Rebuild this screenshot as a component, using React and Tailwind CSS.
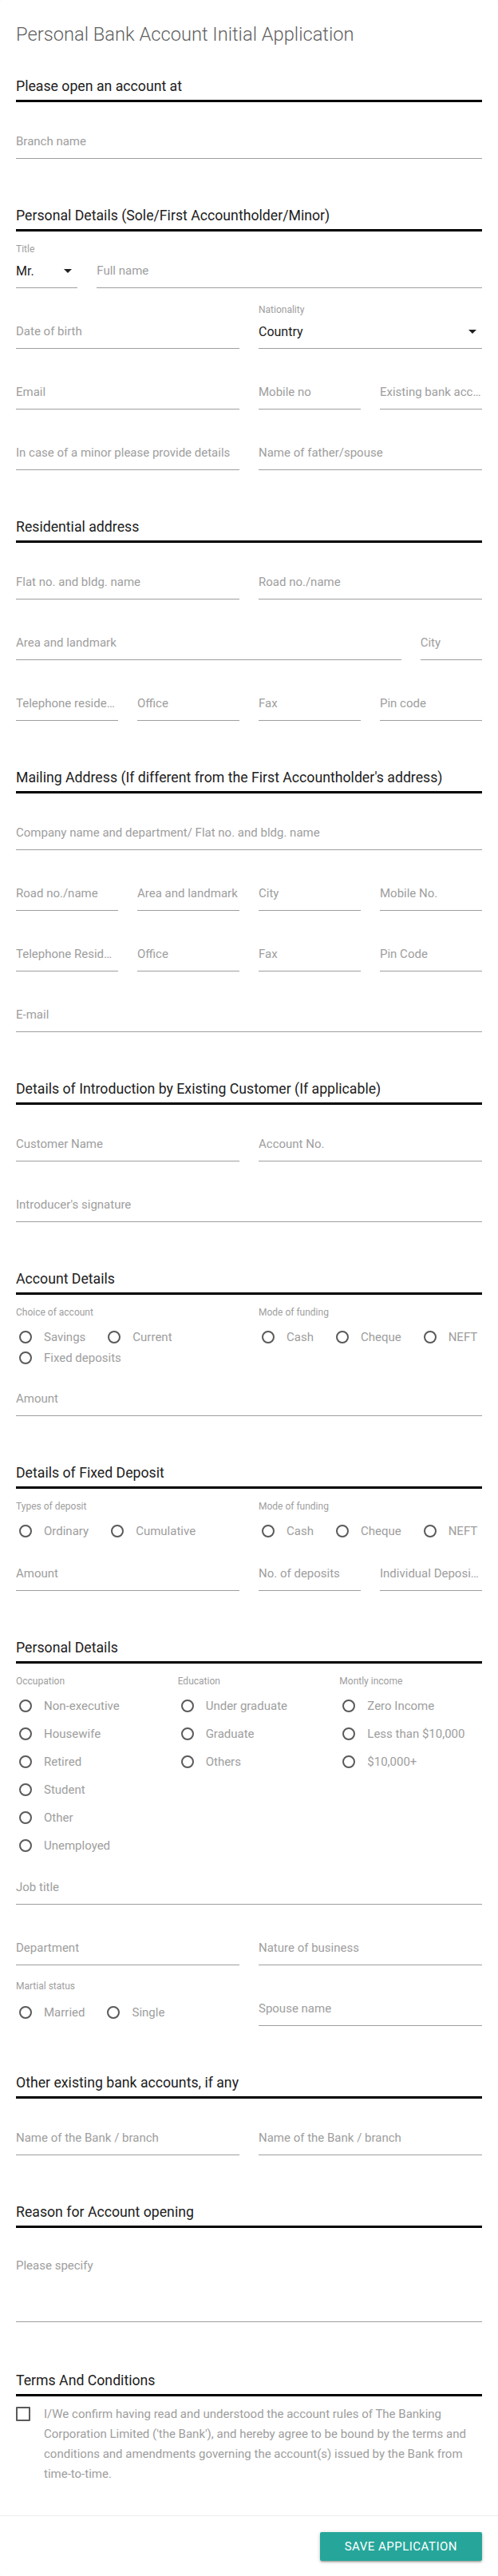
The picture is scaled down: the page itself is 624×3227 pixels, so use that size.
import React from 'react';

const Caret = () => (
  <svg viewBox="0 0 24 24" className="-my-[3px] h-6 w-6 shrink-0 fill-[#212121]">
    <path d="M7 10l5 5 5-5z" />
  </svg>
);

const Field = ({ span = 'col-span-12', h = 'h-[76px]', label, placeholder, value, select, multiline }) => (
  <div className={`${span} ${h} flex min-w-0 flex-col justify-end`}>
    {label && <div className="mb-[11px] text-[12px] leading-[14px] text-[#9e9e9e]">{label}</div>}
    <div className="flex items-start justify-between border-b border-[#9e9e9e] pb-[11px]">
      <div
        className={`min-w-0 truncate leading-[19px] ${value ? 'text-[16px] text-[#212121]' : 'text-[15px] text-[#9e9e9e]'} ${multiline ? 'h-[68px]' : ''}`}
      >
        {value || placeholder}
      </div>
      {select && <Caret />}
    </div>
  </div>
);

const Radio = ({ label }) => (
  <div className="flex h-[25px] items-start">
    <span className="ml-[4px] mt-[4px] h-4 w-4 shrink-0 rounded-full border-2 border-[#5a5a5a]" />
    <span className="ml-[15px] whitespace-nowrap text-[15px] leading-[25px] text-[#9e9e9e]">{label}</span>
  </div>
);

const RadioGroup = ({ span, label, options, vertical, pt = 'pt-[15px]', mt = 'mt-[12px]' }) => (
  <div className={`${span} ${pt}`}>
    <div className="text-[12px] leading-[14px] text-[#9e9e9e]">{label}</div>
    <div className={`${mt} ${vertical ? 'flex flex-col gap-[10px]' : 'flex flex-wrap gap-x-6 gap-y-[1px]'}`}>
      {options.map((o) => (
        <Radio key={o} label={o} />
      ))}
    </div>
  </div>
);

const Heading = ({ children, mt = 'mt-[59px]' }) => (
  <h2 className={`${mt} border-b-[3px] border-black pb-[5px] text-[17.7px] font-normal leading-[24px] text-[#212121]`}>
    {children}
  </h2>
);

const Grid = ({ children, first = true }) => (
  <div className={`grid grid-cols-12 gap-x-6 ${first ? '-mt-[5px]' : ''}`}>{children}</div>
);

export default function App() {
  return (
    <div className="bg-white font-['Roboto',sans-serif]">
      <div className="rounded-[2px] bg-white shadow-[0_2px_2px_0_rgba(0,0,0,0.14),0_3px_1px_-2px_rgba(0,0,0,0.12),0_1px_5px_0_rgba(0,0,0,0.2)]">
        <div className="px-5 pb-[39px] pt-[27px]">
          <h1 className="text-[23.7px] font-light leading-[32px] text-[#616161]">
            Personal Bank Account Initial Application
          </h1>

          {/* Branch */}
          <Heading mt="mt-[37px]">Please open an account at</Heading>
          <Grid>
            <Field placeholder="Branch name" />
          </Grid>

          {/* Personal details */}
          <Heading>Personal Details (Sole/First Accountholder/Minor)</Heading>
          <Grid>
            <Field span="col-span-2" label="Title" value="Mr." select />
            <Field span="col-span-10" placeholder="Full name" />
            <Field span="col-span-6" placeholder="Date of birth" />
            <Field span="col-span-6" label="Nationality" value="Country" select />
            <Field span="col-span-6" placeholder="Email" />
            <Field span="col-span-3" placeholder="Mobile no" />
            <Field span="col-span-3" placeholder="Existing bank account no." />
            <Field span="col-span-6" placeholder="In case of a minor please provide details" />
            <Field span="col-span-6" placeholder="Name of father/spouse" />
          </Grid>

          {/* Residential */}
          <Heading>Residential address</Heading>
          <Grid>
            <Field span="col-span-6" placeholder="Flat no. and bldg. name" />
            <Field span="col-span-6" placeholder="Road no./name" />
            <Field span="col-span-10" placeholder="Area and landmark" />
            <Field span="col-span-2" placeholder="City" />
            <Field span="col-span-3" placeholder="Telephone residence" />
            <Field span="col-span-3" placeholder="Office" />
            <Field span="col-span-3" placeholder="Fax" />
            <Field span="col-span-3" placeholder="Pin code" />
          </Grid>

          {/* Mailing */}
          <Heading>Mailing Address (If different from the First Accountholder's address)</Heading>
          <Grid>
            <Field placeholder="Company name and department/ Flat no. and bldg. name" />
            <Field span="col-span-3" placeholder="Road no./name" />
            <Field span="col-span-3" placeholder="Area and landmark" />
            <Field span="col-span-3" placeholder="City" />
            <Field span="col-span-3" placeholder="Mobile No." />
            <Field span="col-span-3" placeholder="Telephone Residence" />
            <Field span="col-span-3" placeholder="Office" />
            <Field span="col-span-3" placeholder="Fax" />
            <Field span="col-span-3" placeholder="Pin Code" />
            <Field placeholder="E-mail" />
          </Grid>

          {/* Introduction */}
          <Heading>Details of Introduction by Existing Customer (If applicable)</Heading>
          <Grid>
            <Field span="col-span-6" placeholder="Customer Name" />
            <Field span="col-span-6" placeholder="Account No." />
            <Field placeholder="Introducer's signature" />
          </Grid>

          {/* Account details */}
          <Heading>Account Details</Heading>
          <Grid first={false}>
            <RadioGroup span="col-span-6" label="Choice of account" options={['Savings', 'Current', 'Fixed deposits']} />
            <RadioGroup span="col-span-6" label="Mode of funding" options={['Cash', 'Cheque', 'NEFT']} />
            <Field h="h-[60px]" placeholder="Amount" />
          </Grid>

          {/* Fixed deposit */}
          <Heading>Details of Fixed Deposit</Heading>
          <Grid first={false}>
            <RadioGroup span="col-span-6" label="Types of deposit" options={['Ordinary', 'Cumulative']} />
            <RadioGroup span="col-span-6" label="Mode of funding" options={['Cash', 'Cheque', 'NEFT']} />
            <Field span="col-span-6" h="h-[62px]" placeholder="Amount" />
            <Field span="col-span-3" h="h-[62px]" placeholder="No. of deposits" />
            <Field span="col-span-3" h="h-[62px]" placeholder="Individual Deposit Amount" />
          </Grid>

          {/* Personal details 2 */}
          <Heading>Personal Details</Heading>
          <Grid first={false}>
            <RadioGroup
              span="col-span-4"
              vertical
              label="Occupation"
              options={['Non-executive', 'Housewife', 'Retired', 'Student', 'Other', 'Unemployed']}
            />
            <RadioGroup span="col-span-4" vertical label="Education" options={['Under graduate', 'Graduate', 'Others']} />
            <RadioGroup
              span="col-span-4"
              vertical
              label="Montly income"
              options={['Zero Income', 'Less than $10,000', '$10,000+']}
            />
            <Field h="h-[61px]" placeholder="Job title" />
            <Field span="col-span-6" placeholder="Department" />
            <Field span="col-span-6" placeholder="Nature of business" />
            <RadioGroup span="col-span-6" pt="pt-[19px]" mt="mt-[14px]" label="Martial status" options={['Married', 'Single']} />
            <Field span="col-span-6" placeholder="Spouse name" />
          </Grid>

          {/* Other accounts */}
          <Heading>Other existing bank accounts, if any</Heading>
          <Grid>
            <Field span="col-span-6" placeholder="Name of the Bank / branch" />
            <Field span="col-span-6" placeholder="Name of the Bank / branch" />
          </Grid>

          {/* Reason */}
          <Heading>Reason for Account opening</Heading>
          <Grid>
            <Field h="h-[123px]" multiline placeholder="Please specify" />
          </Grid>

          {/* Terms */}
          <Heading mt="mt-[61px]">Terms And Conditions</Heading>
          <div className="flex items-start pt-[10px]">
            <span className="mt-[3px] h-[18px] w-[18px] shrink-0 rounded-[1px] border-2 border-[#5a5a5a]" />
            <p className="ml-[17px] text-[15px] leading-[25px] text-[#9e9e9e]">
              I/We confirm having read and understood the account rules of The Banking Corporation Limited ('the
              Bank'), and hereby agree to be bound by the terms and conditions and amendments governing the
              account(s) issued by the Bank from time-to-time.
            </p>
          </div>
        </div>

        <div className="flex justify-end border-t border-[#ececec] px-5 py-5">
          <button className="h-9 rounded-[2px] bg-[#26a69a] px-[31px] text-[15px] uppercase tracking-[0.5px] text-white shadow-[0_2px_2px_0_rgba(0,0,0,0.14),0_3px_1px_-2px_rgba(0,0,0,0.12),0_1px_5px_0_rgba(0,0,0,0.2)]">
            Save Application
          </button>
        </div>
      </div>
    </div>
  );
}
